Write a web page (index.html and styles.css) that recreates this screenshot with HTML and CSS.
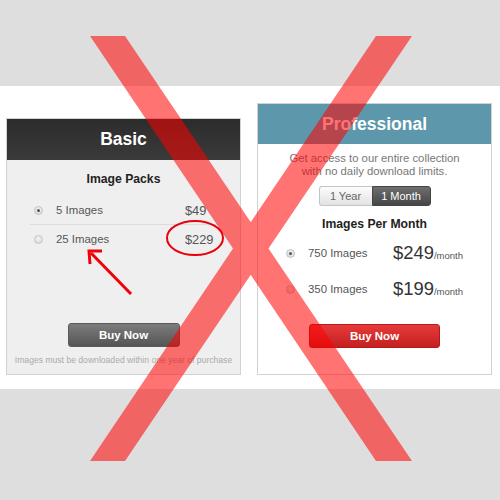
FILE: index.html
```html
<!DOCTYPE html>
<html>
<head>
<meta charset="utf-8">
<link rel="stylesheet" href="styles.css">
</head>
<body>
<div class="page">
  <div class="band"></div>
  <main class="stage">
    <section class="card basic">
      <header class="card-head dark"><h2>Basic</h2></header>
      <h3 class="sub first">Image Packs</h3>
      <ul class="packs">
        <li class="pack"><span class="radio on"></span><span class="label">5 Images</span><span class="price">$49</span></li>
        <li class="pack"><span class="radio"></span><span class="label">25 Images</span><span class="price">$229</span></li>
      </ul>
      <button class="btn gray">Buy Now</button>
      <p class="note">Images must be downloaded within one year of purchase</p>
    </section>
    <section class="card pro">
      <header class="card-head teal"><h2>Professional</h2></header>
      <p class="desc">Get access to our entire collection<br>with no daily download limits.</p>
      <div class="toggle"><span class="seg year">1 Year</span><span class="seg month">1 Month</span></div>
      <h3 class="sub second">Images Per Month</h3>
      <ul class="plans">
        <li class="plan"><span class="radio on"></span><span class="plabel">750 Images</span><span class="big">$249</span><span class="per">/month</span></li>
        <li class="plan"><span class="radio"></span><span class="plabel">350 Images</span><span class="big">$199</span><span class="per">/month</span></li>
      </ul>
      <button class="btn red">Buy Now</button>
    </section>
  </main>
  <svg class="overlay" width="500" height="500" viewBox="0 0 500 500">
    <ellipse cx="195" cy="238" rx="28" ry="17" fill="none" stroke="#e8000a" stroke-width="2"/>
    <line x1="131" y1="294" x2="91" y2="253" stroke="#f0000a" stroke-width="3"/>
    <polyline points="102,251 89,251 90,264" fill="none" stroke="#f0000a" stroke-width="3"/>
    <g opacity="0.55" fill="#ff0000">
      <path d="M90 36 H125 L412 461 H376 Z M376 36 H412 L125 461 H90 Z"/>
    </g>
  </svg>
</div>
</body>
</html>
```
FILE: styles.css
```css
* { box-sizing: border-box; }
html, body { margin: 0; padding: 0; }
body {
  background: #dedede;
  font-family: "Liberation Sans", Arial, sans-serif;
  color: #555;
}
.page { position: relative; width: 500px; height: 500px; }
.band { height: 86px; }
.stage {
  background: #fff;
  height: 303px;
  display: flex;
  align-items: flex-end;
  gap: 16px;
  padding: 0 0 14px 6px;
}
.card {
  width: 235px;
  border: 1px solid #d2d2d2;
  display: flex;
  flex-direction: column;
}
.basic { height: 257px; background: #efefef; }
.pro { height: 272px; background: #fff; }
.card-head {
  display: flex;
  align-items: center;
  justify-content: center;
}
.card-head h2 {
  margin: 0;
  font-size: 17.5px;
  font-weight: bold;
  color: #fff;
}
.dark { height: 41px; background: linear-gradient(#2c2c2c, #3a3a3a); }
.teal { height: 40px; background: #5c97ab; }
.sub {
  margin: 0;
  font-size: 12.2px;
  line-height: 14px;
  font-weight: bold;
  color: #222;
  text-align: center;
}
.sub.first { margin-top: 12px; }
.sub.second { margin-top: 11px; }
.packs {
  list-style: none;
  margin: 10px 22px 0 23px;
  padding: 0;
}
.pack {
  height: 28px;
  display: flex;
  align-items: center;
  padding-left: 4px;
}
.pack:first-child { height: 29px; border-bottom: 1px solid #dcdcdc; }
.radio {
  width: 9px;
  height: 9px;
  border-radius: 50%;
  border: 1px solid #c4c4c4;
  background: radial-gradient(circle at 50% 35%, #f4f4f4, #d4d4d4);
  margin-right: 13px;
  flex: none;
  display: flex;
  align-items: center;
  justify-content: center;
}
.radio.on::after {
  content: "";
  width: 3px;
  height: 3px;
  border-radius: 50%;
  background: #555;
}
.label {
  width: 129px;
  font-size: 11.4px;
  color: #555;
}
.price { font-size: 12.8px; color: #555; }
.btn {
  align-self: center;
  height: 24px;
  margin-top: auto;
  border-radius: 3px;
  font-family: "Liberation Sans", Arial, sans-serif;
  font-weight: bold;
  font-size: 11.5px;
  color: #fff;
  padding: 0;
}
.btn.gray {
  width: 112px;
  background: linear-gradient(#7c7c7c, #555);
  border: 1px solid #5a5a5a;
}
.btn.red {
  width: 131px;
  background: linear-gradient(#e63a3a, #c42020);
  border: 1px solid #b81818;
  margin-bottom: 26px;
}
.note {
  margin: 8px 0 9px;
  font-size: 8.6px;
  line-height: 10px;
  color: #aaa;
  text-align: center;
}
.desc {
  margin: 8px 0 0;
  font-size: 11.3px;
  line-height: 13px;
  color: #777;
  text-align: center;
}
.toggle {
  margin-top: 8px;
  align-self: center;
  display: flex;
  height: 20px;
}
.seg {
  display: flex;
  align-items: center;
  justify-content: center;
  font-size: 11px;
}
.year {
  width: 53px;
  color: #666;
  background: linear-gradient(#fdfdfd, #e2e2e2);
  border: 1px solid #c4c4c4;
  border-right: none;
  border-radius: 3px 0 0 3px;
}
.month {
  width: 59px;
  color: #fff;
  background: linear-gradient(#6e6e6e, #464646);
  border: 1px solid #444;
  border-radius: 0 3px 3px 0;
}
.plans {
  list-style: none;
  margin: 4px 0 0;
  padding: 0 0 0 28px;
}
.plan {
  height: 36px;
  display: flex;
  align-items: center;
}
.plabel {
  width: 85px;
  font-size: 11.4px;
  color: #555;
}
.big { font-size: 18.4px; color: #333; }
.per { font-size: 9.5px; color: #555; align-self: center; margin-top: 5px; }
.overlay {
  position: absolute;
  left: 0;
  top: 0;
  pointer-events: none;
}
```
